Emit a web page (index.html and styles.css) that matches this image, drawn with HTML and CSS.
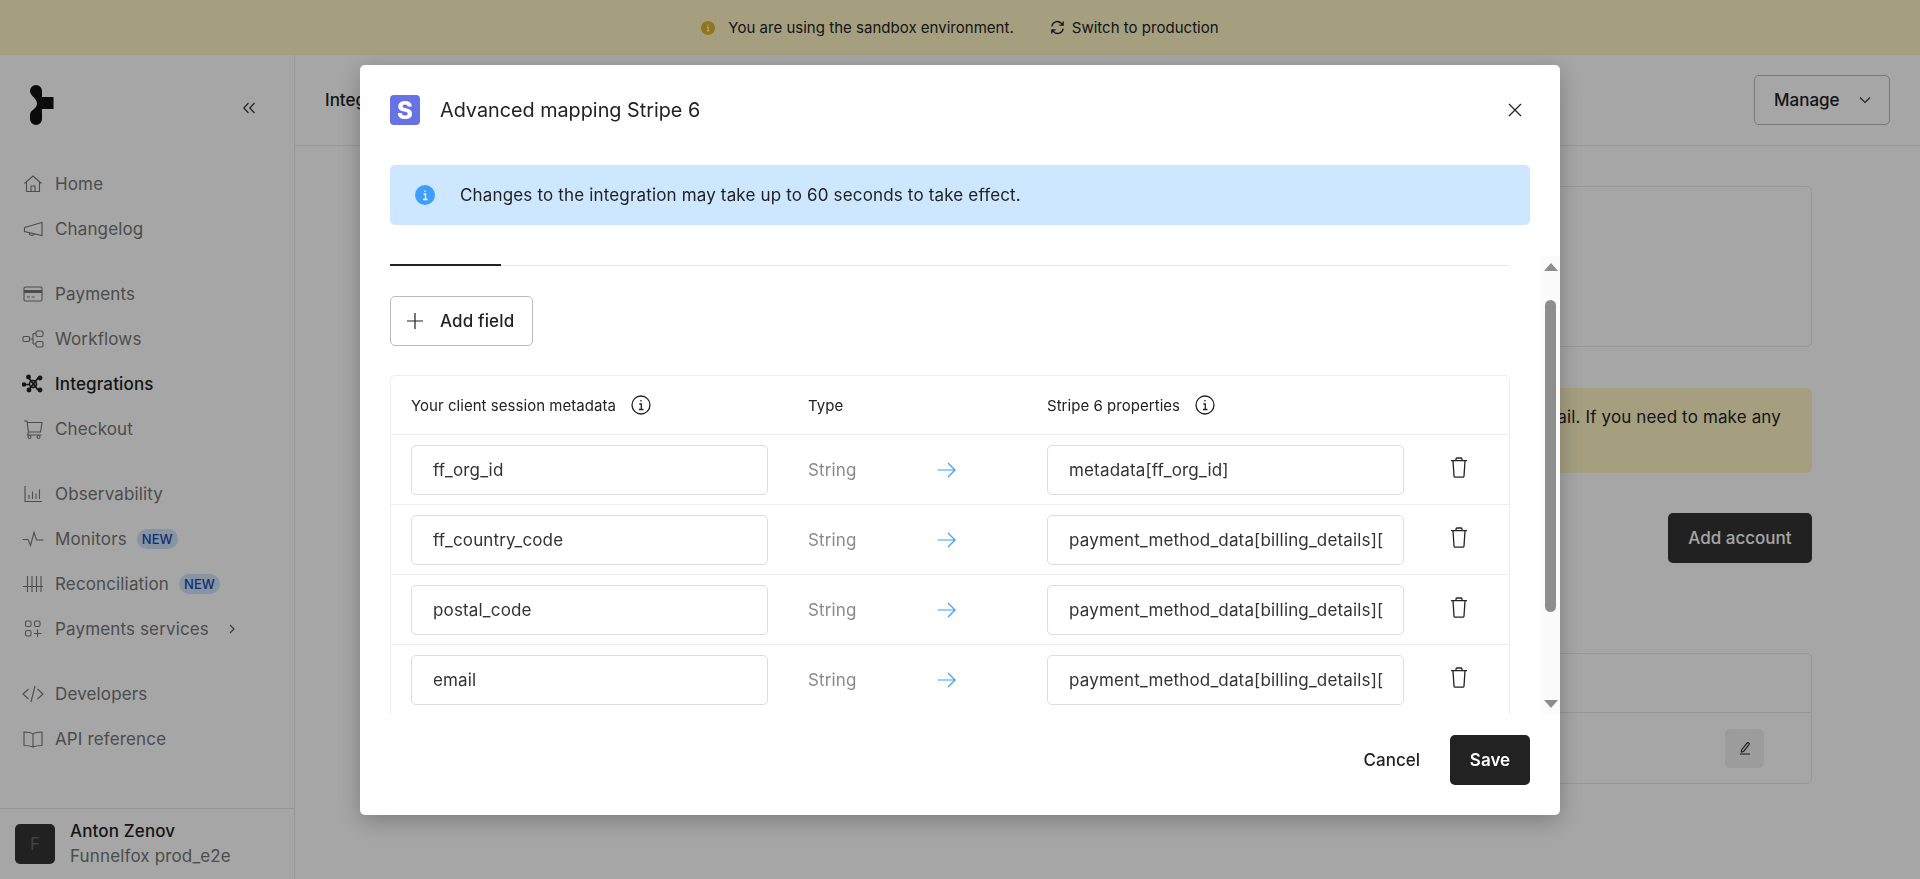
FILE: index.html
```html
<!DOCTYPE html>
<html lang="en">
<head>
<meta charset="utf-8">
<title>Advanced mapping Stripe 6</title>
<link rel="stylesheet" href="styles.css">
</head>
<body>
<div class="page">
  <div class="banner">
    <svg class="banner-info" viewBox="0 0 14 14"><circle cx="7" cy="7" r="7" fill="#e0b32a"/><path d="M7 3.600v1.200M5.900 6.400H7.200V10M5.800 10h2.800" stroke="#fff" fill="none" stroke-width="1.200"/></svg>
    <span class="banner-text">You are using the sandbox environment.</span>
    <svg class="banner-sync" viewBox="0 0 16 16" fill="none" stroke="#222" stroke-width="1.400"><path d="M2 7A5.800 5.800 0 0 1 12 3.500l2 2M14 1.500v4h-4M14 9A5.800 5.800 0 0 1 4 12.500l-2-2M2 14.500v-4h4"/></svg>
    <span class="banner-link">Switch to production</span>
  </div>
  <div class="app">
    <aside class="sidebar">
      <div class="brand">
        <svg class="logo" viewBox="0 0 24 40"><path d="M6 0a6 6 0 0 1 6 6v6h11.500v12H12v10a6 6 0 0 1-12 0v-4c0-5 7-6 7-11.500S0 11 0 6a6 6 0 0 1 6-6z" fill="#111"/></svg>
        <svg class="collapse" viewBox="0 0 12 12" fill="none" stroke="#333" stroke-width="1.200"><path d="M5.500 1L0.800 6l4.700 5M11.500 1L6.800 6l4.700 5"/></svg>
      </div>
      <nav class="nav">
        <div class="nav-group">
          <a class="nav-item"><svg class="ni" viewBox="0 0 22 22"><path d="M2.500 10.500L11 3l8.500 7.500M4.500 9v9.500h13V9M9 18.500v-5.500h4v5.500"/></svg>Home</a>
          <a class="nav-item"><svg class="ni" viewBox="0 0 22 22"><path d="M2.500 9.500L20 4.500v13L2.500 13.500zM7 14.500a3 3 0 0 0 5.500 1.500"/></svg>Changelog</a>
        </div>
        <div class="nav-group">
          <a class="nav-item"><svg class="ni" viewBox="0 0 22 22"><rect x="2" y="4" width="18" height="14" rx="1.500"/><path d="M2 8.500h18" stroke-width="3"/><path d="M5 14h3M9.500 14h3"/></svg>Payments</a>
          <a class="nav-item"><svg class="ni" viewBox="0 0 22 22"><rect x="1" y="8.500" width="6.500" height="5" rx="1"/><rect x="14" y="3" width="7" height="5.500" rx="1.500"/><rect x="14" y="13.500" width="7" height="5.500" rx="1.500"/><path d="M7.500 11H11M11 5.500h3M11 16h3M11 5.500V16"/></svg>Workflows</a>
          <a class="nav-item active"><svg class="ni ni-strong" viewBox="0 0 22 22"><path d="M6.500 4.500L16 17M16.500 4.500L7 16.500M2 11.500h6"/><circle cx="11" cy="11" r="3.500" fill="none"/><circle cx="6.500" cy="4" r="1.600" fill="#222"/><circle cx="18" cy="5" r="1.600" fill="#222"/><circle cx="18" cy="17" r="1.600" fill="#222"/><circle cx="7" cy="17" r="1.600" fill="#222"/><circle cx="2" cy="11.500" r="1.400" fill="#222"/></svg>Integrations</a>
          <a class="nav-item"><svg class="ni" viewBox="0 0 22 22"><path d="M2 3h3l1.500 11h12L20 4.500H5.500M6.500 14l-1 3h14"/><circle cx="7.500" cy="19" r="1.500"/><circle cx="16.500" cy="19" r="1.500"/></svg>Checkout</a>
        </div>
        <div class="nav-group">
          <a class="nav-item"><svg class="ni" viewBox="0 0 22 22"><path d="M3 3v15.500h17M7 16v-4M10.500 16V8.500M14 16v-5.500M17.500 16V6.500"/></svg>Observability</a>
          <a class="nav-item"><svg class="ni" viewBox="0 0 22 22"><path d="M0.500 11.500H6L8.500 17.500L12 4.500L14.500 12H21.500"/></svg>Monitors<span class="badge">NEW</span></a>
          <a class="nav-item"><svg class="ni" viewBox="0 0 22 22"><path d="M5.500 3v16M10 3v16M14.500 3v16M19 3v16M1 13.500h20"/></svg>Reconciliation<span class="badge">NEW</span></a>
          <a class="nav-item"><svg class="ni" viewBox="0 0 22 22"><rect x="3.500" y="3" width="5.500" height="5.500" rx="1.500"/><rect x="12.500" y="3" width="5.500" height="5.500" rx="1.500"/><rect x="3.500" y="12.500" width="5.500" height="5.500" rx="1.500"/><path d="M12 15.500h7.500M15.500 11.500v7.500"/></svg>Payments services<svg class="nav-chevron" viewBox="0 0 6 12" fill="none" stroke="#555" stroke-width="1.100"><path d="M1 2l4 4-4 4"/></svg></a>
        </div>
        <div class="nav-group">
          <a class="nav-item"><svg class="ni" viewBox="0 0 22 22"><path d="M6.500 6L1 11l5.500 5M15.500 6l5.500 5-5.500 5M13 3L9 19"/></svg>Developers</a>
          <a class="nav-item"><svg class="ni" viewBox="0 0 22 22"><path d="M11 6C9 4.500 5.500 4 2 4v13.500c3.500 0 7 .5 9 1.500 2-1 5.500-1.500 9-1.500V4c-3.500 0-7 .5-9 2zM11 6v13"/></svg>API reference</a>
        </div>
      </nav>
      <div class="user">
        <div class="avatar">F</div>
        <div class="user-text">
          <div class="user-name">Anton Zenov</div>
          <div class="user-org">Funnelfox prod_e2e</div>
        </div>
      </div>
    </aside>
    <main class="main">
      <header class="topbar">
        <span class="crumb">Integrations</span>
        <button class="manage">Manage<svg class="manage-chevron" viewBox="0 0 12 8" fill="none" stroke="#333" stroke-width="1.200"><path d="M1 1.500L6 6.500l5-5"/></svg></button>
      </header>
      <div class="content">
        <section class="bg-card"></section>
        <section class="bg-alert">
          <span class="bg-alert-line">Some settings for this account can only be changed by contacting support by email. If you need to make any</span>
          <span class="bg-alert-rest">changes, let us know.</span>
        </section>
        <div class="bg-actions"><button class="add-account">Add account</button></div>
        <section class="bg-table">
          <div class="bg-table-head"></div>
          <div class="bg-table-row">
            <button class="edit-btn"><svg class="edit-icon" viewBox="0 0 12 14" fill="none" stroke="#222" stroke-width="1.100"><path d="M2.500 9L8 2.200a1.200 1.200 0 0 1 2 1.500L4.500 10.500 2.500 11zM1 13h10"/></svg></button>
          </div>
        </section>
      </div>
    </main>
  </div>
</div>

<div class="overlay">
  <div class="modal">
    <div class="modal-head">
      <div class="stripe-logo">S</div>
      <h2 class="modal-title">Advanced mapping Stripe 6</h2>
      <svg class="close" viewBox="0 0 14 14" fill="none" stroke="#222" stroke-width="1.200"><path d="M1 1l12 12M13 1L1 13"/></svg>
    </div>
    <div class="notice">
      <svg class="notice-icon" viewBox="0 0 20 20"><circle cx="10" cy="10" r="10" fill="#3d9eff"/><path d="M10 5.500v1.500M8.500 9h2v5.500M8 14.500h4.500" stroke="#fff" fill="none" stroke-width="1.300"/></svg>
      <span>Changes to the integration may take up to 60 seconds to take effect.</span>
    </div>
    <div class="modal-body">
      <div class="scroll-content">
        <div class="tabs"><div class="tab-active"></div></div>
        <button class="add-field"><svg class="plus" viewBox="0 0 18 18" fill="none" stroke="#222" stroke-width="1.200"><path d="M9 1v16M1 9h16"/></svg>Add field</button>
        <div class="map-table">
          <div class="map-row map-head">
            <div class="th">Your client session metadata<svg class="th-info" viewBox="0 0 20 20"><circle cx="10" cy="10" r="9" fill="none" stroke="#222" stroke-width="1.300"/><path d="M10 5v1.500M8.300 9H10.300V14.500M8 14.500h4.500" stroke="#222" fill="none" stroke-width="1.300"/></svg></div>
            <div class="th th-type">Type</div>
            <div class="th">Stripe 6 properties<svg class="th-info" viewBox="0 0 20 20"><circle cx="10" cy="10" r="9" fill="none" stroke="#222" stroke-width="1.300"/><path d="M10 5v1.500M8.300 9H10.300V14.500M8 14.500h4.500" stroke="#222" fill="none" stroke-width="1.300"/></svg></div>
          </div>
          <div class="map-row">
            <input class="field" value="ff_org_id" readonly>
            <div class="type"><span class="type-name">String</span><svg class="arrow" viewBox="0 0 19 16" fill="none" stroke="#3d9eff" stroke-width="1.200"><path d="M0.500 8H18M11 1l7 7-7 7"/></svg></div>
            <input class="field" value="metadata[ff_org_id]" readonly>
            <svg class="trash" viewBox="0 0 18 21" fill="none" stroke="#222" stroke-width="1.300"><path d="M1 3.700h16M6 3.700V2a1 1 0 0 1 1-1h4a1 1 0 0 1 1 1v1.700M3 3.700l1 15.300a1.200 1.200 0 0 0 1.200 1.200h7.600A1.200 1.200 0 0 0 14 19l1-15.300"/></svg>
          </div>
          <div class="map-row">
            <input class="field" value="ff_country_code" readonly>
            <div class="type"><span class="type-name">String</span><svg class="arrow" viewBox="0 0 19 16" fill="none" stroke="#3d9eff" stroke-width="1.200"><path d="M0.500 8H18M11 1l7 7-7 7"/></svg></div>
            <input class="field" value="payment_method_data[billing_details][address][country]" readonly>
            <svg class="trash" viewBox="0 0 18 21" fill="none" stroke="#222" stroke-width="1.300"><path d="M1 3.700h16M6 3.700V2a1 1 0 0 1 1-1h4a1 1 0 0 1 1 1v1.700M3 3.700l1 15.300a1.200 1.200 0 0 0 1.200 1.200h7.600A1.200 1.200 0 0 0 14 19l1-15.300"/></svg>
          </div>
          <div class="map-row">
            <input class="field" value="postal_code" readonly>
            <div class="type"><span class="type-name">String</span><svg class="arrow" viewBox="0 0 19 16" fill="none" stroke="#3d9eff" stroke-width="1.200"><path d="M0.500 8H18M11 1l7 7-7 7"/></svg></div>
            <input class="field" value="payment_method_data[billing_details][address][postal_code]" readonly>
            <svg class="trash" viewBox="0 0 18 21" fill="none" stroke="#222" stroke-width="1.300"><path d="M1 3.700h16M6 3.700V2a1 1 0 0 1 1-1h4a1 1 0 0 1 1 1v1.700M3 3.700l1 15.300a1.200 1.200 0 0 0 1.200 1.200h7.600A1.200 1.200 0 0 0 14 19l1-15.300"/></svg>
          </div>
          <div class="map-row">
            <input class="field" value="email" readonly>
            <div class="type"><span class="type-name">String</span><svg class="arrow" viewBox="0 0 19 16" fill="none" stroke="#3d9eff" stroke-width="1.200"><path d="M0.500 8H18M11 1l7 7-7 7"/></svg></div>
            <input class="field" value="payment_method_data[billing_details][email]" readonly>
            <svg class="trash" viewBox="0 0 18 21" fill="none" stroke="#222" stroke-width="1.300"><path d="M1 3.700h16M6 3.700V2a1 1 0 0 1 1-1h4a1 1 0 0 1 1 1v1.700M3 3.700l1 15.300a1.200 1.200 0 0 0 1.200 1.200h7.600A1.200 1.200 0 0 0 14 19l1-15.300"/></svg>
          </div>
        </div>
      </div>
      <div class="scrollbar">
        <div class="sb-up"></div>
        <div class="sb-thumb"></div>
        <div class="sb-down"></div>
      </div>
    </div>
    <div class="modal-foot">
      <button class="cancel">Cancel</button>
      <button class="save">Save</button>
    </div>
  </div>
</div>
</body>
</html>
```
FILE: styles.css
```css
* { box-sizing: border-box; }
html, body { margin: 0; height: 100%; overflow: hidden; }
body { font-family: Inter, "Liberation Sans", sans-serif; color: #222; background: #fff; }
button { font-family: inherit; cursor: pointer; }

.page { height: 879px; display: flex; flex-direction: column; }

.banner {
  height: 55px; flex: none; background: #fef5c5;
  display: flex; align-items: center; justify-content: center;
  font-size: 15px; letter-spacing: 0.02px;
}
.banner-info { width: 14px; height: 14px; margin-right: 13px; }
.banner-text { margin-right: 36px; }
.banner-sync { width: 15px; height: 15px; margin-right: 7px; }

.app { flex: 1; display: flex; min-height: 0; }

.sidebar { width: 295px; flex: none; border-right: 1px solid #e8e8e8; display: flex; flex-direction: column; }
.brand { height: 90px; flex: none; display: flex; align-items: flex-start; padding: 30px 0 0 30px; }
.logo { width: 24px; height: 40px; }
.collapse { width: 12px; height: 12px; margin: 17px 0 0 189px; }

.nav { flex: 1; padding-top: 16px; display: flex; flex-direction: column; gap: 20px; }
.nav-item {
  height: 45px; display: flex; align-items: center; padding-left: 22px;
  font-size: 17px; letter-spacing: 0.14px; color: #767676;
}
.nav-item.active { color: #222; font-weight: 500; }
.ni { width: 22px; height: 22px; margin-right: 11px; fill: none; stroke: #777; stroke-width: 1.1; flex: none; }
.ni-strong { stroke: #222; stroke-width: 1.7; }
.badge {
  margin-left: 10px; height: 20px; padding: 0 5px; border-radius: 10px;
  background: #cfe3f8; color: #1e46b4; font-size: 13px; font-weight: 500; letter-spacing: 0;
  display: flex; align-items: center;
}
.nav-chevron { width: 6px; height: 12px; margin-left: 20px; }

.user { height: 71px; flex: none; border-top: 1px solid #e8e8e8; display: flex; align-items: center; padding: 0 0 0 15px; gap: 15px; }
.avatar {
  width: 40px; height: 40px; border-radius: 5px; background: #333;
  display: flex; align-items: center; justify-content: center;
  color: #666; font-size: 17px;
}
.user-name { font-size: 17px; font-weight: 500; line-height: 25px; letter-spacing: 0.14px; }
.user-org { font-size: 17px; color: #767676; line-height: 25px; letter-spacing: 0.14px; }

.main { flex: 1; min-width: 0; display: flex; flex-direction: column; }
.topbar {
  height: 91px; flex: none; border-bottom: 1px solid #e8e8e8;
  display: flex; align-items: center; justify-content: space-between;
  padding: 0 30px 0 30px;
}
.crumb { font-size: 17px; font-weight: 500; }
.manage {
  width: 136px; height: 50px; border: 1px solid #bbb; border-radius: 5px; background: #fff;
  font-size: 17px; font-weight: 500; color: #222;
  display: flex; align-items: center; padding: 0 0 0 19px;
}
.manage-chevron { width: 12px; height: 8px; margin-left: 19px; }

.content { flex: 1; padding: 40px 108px 0 108px; display: flex; flex-direction: column; }
.bg-card { height: 161px; border: 1px solid #e8e8e8; border-radius: 5px; flex: none; }
.bg-alert {
  margin-top: 41px; height: 85px; flex: none; background: #fef5c5; border-radius: 5px;
  padding: 17px 31px 0 20px; font-size: 17px; letter-spacing: 0.14px; line-height: 25px; display: flex; flex-direction: column;
}
.bg-alert-line { text-align: right; white-space: nowrap; }
.bg-actions { margin-top: 40px; display: flex; justify-content: flex-end; flex: none; }
.add-account {
  width: 144px; height: 50px; background: #333; color: #fff; border: 0; border-radius: 5px;
  font-size: 17px; font-weight: 500;
}
.bg-table { margin-top: 90px; height: 131px; flex: none; border: 1px solid #e8e8e8; border-radius: 5px; }
.bg-table-head { height: 59px; border-bottom: 1px solid #e8e8e8; }
.bg-table-row { height: 70px; display: flex; align-items: center; justify-content: flex-end; padding-right: 47px; }
.edit-btn { width: 39px; height: 39px; border: 0; border-radius: 5px; background: #f0f0f0; display: flex; align-items: center; justify-content: center; padding: 0; }
.edit-icon { width: 12px; height: 14px; }

.overlay { position: fixed; inset: 0; background: rgba(0, 0, 0, 0.35); display: flex; justify-content: center; align-items: flex-start; padding-top: 65px; }
.modal {
  width: 1200px; height: 750px; background: #fff; border-radius: 5px;
  box-shadow: 0 6px 24px rgba(0, 0, 0, 0.25);
  display: flex; flex-direction: column;
}
.modal-head { height: 100px; flex: none; display: flex; align-items: flex-start; padding: 30px 30px 0; }
.stripe-logo {
  width: 30px; height: 30px; border-radius: 4px; background: #6772e5; color: #fff;
  display: flex; align-items: center; justify-content: center;
  font-size: 24px; font-weight: 800; margin-right: 20px; flex: none;
}
.modal-title { margin: 0; font-size: 19.8px; line-height: 30px; font-weight: 400; flex: 1; }
.close { width: 14px; height: 14px; margin: 8px 8px 0 0; }

.notice {
  margin: 0 30px; height: 60px; flex: none; background: #cce7ff; border-radius: 5px;
  display: flex; align-items: center; padding-left: 25px; font-size: 17px; letter-spacing: 0.16px;
}
.notice-icon { width: 20px; height: 20px; margin-right: 25px; }

.modal-body { position: relative; height: 459px; margin-top: 30px; flex: none; overflow: hidden; }
.scroll-content { padding: 9px 50px 0 30px; }
.tabs { height: 2px; background: linear-gradient(#fff 50%, #e8e8e8 50%); }
.tab-active { width: 111px; height: 2px; background: #222; }

.add-field {
  margin-top: 30px; width: 143px; height: 50px; background: #fff; border: 1px solid #bbb; border-radius: 5px;
  display: flex; align-items: center; padding: 0 0 0 15px;
  font-size: 17px; font-weight: 500; letter-spacing: 0.14px; color: #222;
}
.plus { width: 18px; height: 18px; margin-right: 16px; }

.map-table { margin-top: 29px; border: 1px solid #eee; border-radius: 5px 5px 0 0; }
.map-row {
  height: 70px; display: grid; grid-template-columns: 357px 279px 357px 1fr;
  align-items: center; padding: 0 20px; border-top: 1px solid #eee;
}
.map-head { height: 58px; border-top: 0; }
.th { font-size: 15px; font-weight: 400; letter-spacing: 0.04px; display: flex; align-items: center; }
.th-type { padding-left: 40px; }
.th-info { width: 20px; height: 20px; margin-left: 15px; }
.field {
  width: 357px; height: 50px; border: 1px solid #ddd; border-radius: 5px; padding: 0 20px 0 21px;
  font-family: inherit; font-size: 17px; letter-spacing: 0.16px; color: #333; outline: 0; background: #fff;
}
.type { padding-left: 40px; display: grid; grid-template-columns: 129px 1fr; align-items: center; }
.type-name { font-size: 17px; color: #8a8a8a; letter-spacing: 0.14px; }
.arrow { width: 19px; height: 16px; }
.trash { width: 18px; height: 21px; margin: -4px 0 0 46px; }

.scrollbar { position: absolute; right: 0; top: 0; bottom: 0; width: 19px; background: #fbfbfb; }
.sb-up, .sb-down { position: absolute; left: 3px; width: 0; height: 0; border-left: 7px solid transparent; border-right: 7px solid transparent; }
.sb-up { top: 8px; border-bottom: 8px solid #8e8e8e; }
.sb-down { bottom: 6px; border-top: 8px solid #8e8e8e; }
.sb-thumb { position: absolute; left: 4px; top: 45px; width: 11px; height: 312px; background: #8e8e8e; border-radius: 6px; }

.modal-foot { flex: 1; display: flex; align-items: center; justify-content: flex-end; padding: 0 30px 9px; gap: 30px; }
.cancel { border: 0; background: none; font-size: 17px; font-weight: 500; color: #222; padding: 0; }
.save { width: 80px; height: 50px; border: 0; border-radius: 5px; background: #222; color: #fff; font-size: 17px; font-weight: 600; }
```
